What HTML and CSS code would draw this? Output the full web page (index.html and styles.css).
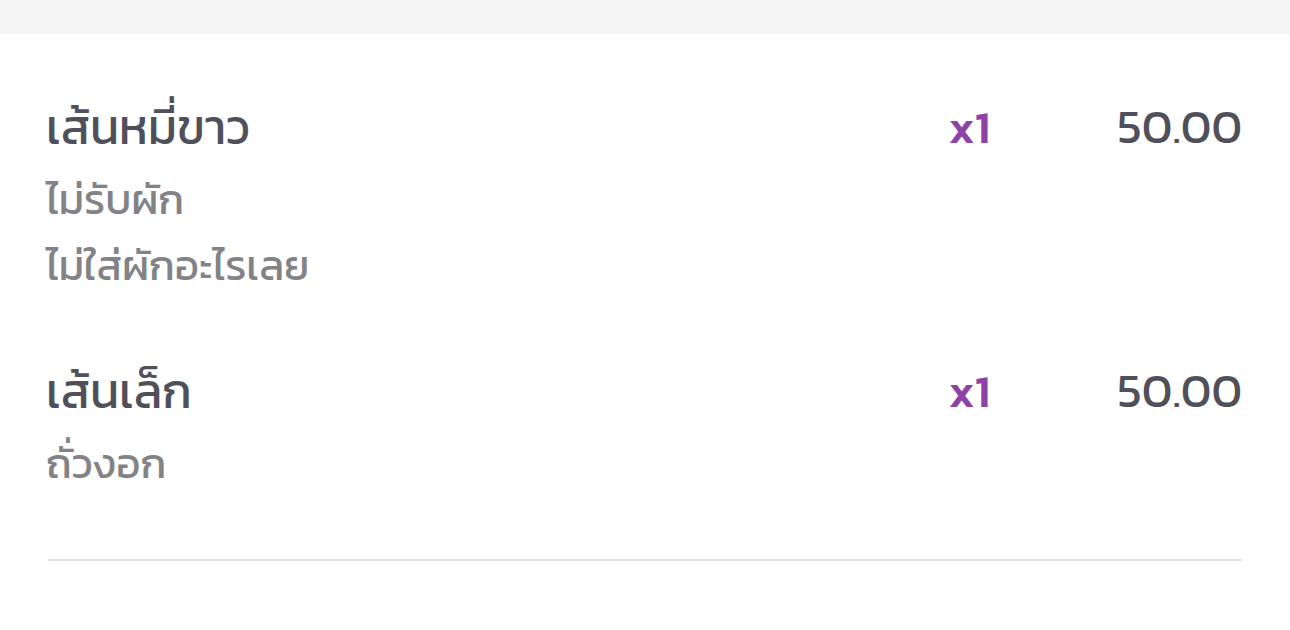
FILE: index.html
```html
<!DOCTYPE html>
<html lang="th">
<head>
    <meta charset="UTF-8">
    <meta name="viewport" content="width=device-width, initial-scale=1.0">
    <title>Order items</title>
    <link rel="stylesheet" href="styles.css">
</head>
<body>
    <div class="top-bar"></div>

    <div class="order-list">
        <div class="order-item">
            <div class="item-info">
                <div class="item-name">เส้นหมี่ขาว</div>
                <div class="item-option">ไม่รับผัก</div>
                <div class="item-option">ไม่ใส่ผักอะไรเลย</div>
            </div>
            <div class="item-qty">x1</div>
            <div class="item-price">50.00</div>
        </div>

        <div class="order-item">
            <div class="item-info">
                <div class="item-name">เส้นเล็ก</div>
                <div class="item-option">ถั่วงอก</div>
            </div>
            <div class="item-qty">x1</div>
            <div class="item-price">50.00</div>
        </div>

        <div class="divider"></div>
    </div>
</body>
</html>
```

FILE: styles.css
```css
:root {
    --text: #50505a;
    --muted: #838387;
    --accent: #8d42a6;
    --line: #e2e2e4;
    --bar: #f5f5f5;
}

* {
    margin: 0;
    padding: 0;
    box-sizing: border-box;
}

body {
    font-family: Kanit, "Noto Sans Thai", sans-serif;
    background: #fff;
    color: var(--text);
}

.top-bar {
    height: 34px;
    background: var(--bar);
}

.order-list {
    padding: 63px 48px 0 46px;
}

.order-item {
    display: flex;
    align-items: flex-start;
    margin-bottom: 62px;
}

.order-item:last-of-type {
    margin-bottom: 50px;
}

.item-info {
    flex: 1;
}

.item-name {
    font-size: 48px;
    line-height: 60px;
    font-weight: 400;
    color: var(--text);
    margin-bottom: 10px;
}

.item-option {
    font-size: 42px;
    line-height: 66px;
    font-weight: 400;
    color: var(--muted);
}

.item-qty {
    font-size: 46px;
    line-height: 60px;
    font-weight: 500;
    color: var(--accent);
}

.item-price {
    width: 252px;
    text-align: right;
    font-size: 47px;
    line-height: 60px;
    font-weight: 400;
    color: var(--text);
}

.divider {
    height: 2px;
    background: var(--line);
    margin-left: 2px;
}
```
